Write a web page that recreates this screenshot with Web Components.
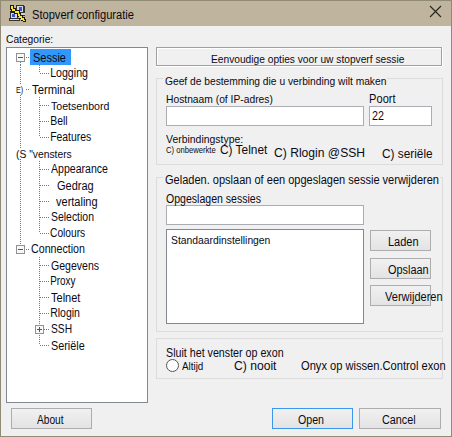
<!DOCTYPE html>
<html lang="nl"><head><meta charset="utf-8"><title>Stopverf configuratie</title>
<style>
html,body{margin:0;padding:0}
body{width:452px;height:437px;overflow:hidden;font-family:"Liberation Sans",Arial,sans-serif;color:#0a0a14}
</style></head><body>
<config-window></config-window>
<script>
const pen = document.createElement('canvas').getContext('2d');
function define(name, html, setup){
  const t = document.createElement('template');
  t.innerHTML = html;
  customElements.define(name, class extends HTMLElement{
    connectedCallback(){
      if(this.shadowRoot) return;
      this.attachShadow({mode:'open'}).append(t.content.cloneNode(true));
      if(setup) setup(this, this.shadowRoot);
    }
  });
}
/* One line of text whose inked width is given by "w". x and y are the gaps before it. */
define('fit-label', `<style>:host{display:block;flex:none;height:14px;line-height:14px;white-space:nowrap}
span{display:inline-block;transform-origin:0 0;white-space:pre}</style><span></span>`, (el, root) => {
  const s = root.querySelector('span'), text = el.getAttribute('text'), size = el.getAttribute('s') || 12.5, w = +el.getAttribute('w');
  s.textContent = text;
  s.style.fontSize = size + 'px';
  pen.font = size + 'px "Liberation Sans"';
  const m = pen.measureText(text), k = w / (m.actualBoundingBoxRight + m.actualBoundingBoxLeft);
  s.style.transform = `translateX(${m.actualBoundingBoxLeft * k}px) scaleX(${k})`;
  el.style.width = w + 'px';
  el.style.marginLeft = (el.getAttribute('x') || 0) + 'px';
  el.style.marginTop = (el.getAttribute('y') || 0) + 'px';
});
define('title-bar', `<style>:host{display:flex;height:25px;background:#bfb59f;box-sizing:border-box}
.icon{margin:4px 0 0 8px;flex:none}.close{margin:4px 0 0 auto;padding-right:9px;flex:none}</style>
<svg class="icon" width="17" height="17" viewBox="0 0 17 17" shape-rendering="crispEdges">
<path d="M7 0h8v1h1v8h-9z" fill="#333"/><path d="M8 1h6v6H8z" fill="#d8dade"/><path d="M10 2h3v4h-3z" fill="#3a56cc"/>
<path d="M10 8h6v2h-6z" fill="#d0d2d6"/><path d="M10 10h6v1h-6z" fill="#333"/>
<path d="M1 6h8v8H1z" fill="#333"/><path d="M2 7h6v6H2z" fill="#d8dade"/><path d="M3 9h3v3H3z" fill="#3a56cc"/>
<path d="M0 13h11v3H0z" fill="#333"/><path d="M1 14h9v1H1z" fill="#d8dade"/>
<path d="M1 0h4v3h2v2h4v3h1v2h2v2h2v2h1v3h-3v-1h-2v-2h-2v-2h-2v-3h-3v-1h-3v-3h-1z" fill="#1a1a10"/>
<path d="M2 1h2v3h2v2h4v3h1v2h2v2h2v2h1v1h-2v-1h-2v-2h-2v-2h-1v-3h-3v-2h-3v-2h-1z" fill="#ffe52e"/></svg>
<fit-label text="Stopverf configuratie" s="12.5" w="102" x="6" y="6"></fit-label>
<svg class="close" width="13" height="13" viewBox="0 0 13 13"><path d="M1 1L12 12M12 1L1 12" stroke="#29261f" stroke-width="1.15"/></svg>`);
define('push-button', `<style>:host{display:flex;flex:none;box-sizing:border-box;height:21px;border:1px solid #adadad;background:linear-gradient(#f1f1f1,#e3e3e3)}
:host([primary]){border-color:#3b97ee}</style><slot></slot>`, el => { el.style.width = el.getAttribute('w') + 'px'; });
define('text-field', `<style>:host{display:flex;flex:none;box-sizing:border-box;height:20px;border:1px solid #abadb3;background:#fff}
:host([list]){height:95px;border-color:#828790}</style><slot></slot>`, el => { el.style.width = el.getAttribute('w') + 'px'; });
define('group-box', `<style>:host{display:flex;flex-direction:column;flex:none;box-sizing:border-box;width:287px;border:1px solid #dcdcdc}
.legend{display:flex;align-self:flex-start;margin:-6px 0 1px 6px;padding:0 1px 0 2px;background:#f0f0f0;height:14px}
:host(:not([title-w])) .legend{display:none}</style><div class="legend"></div><slot></slot>`, (el, root) => {
  el.style.height = el.getAttribute('h') + 'px';
  if(el.hasAttribute('title-w')){
    const l = document.createElement('fit-label');
    l.setAttribute('text', el.getAttribute('legend'));
    l.setAttribute('w', el.getAttribute('title-w'));
    l.setAttribute('s', el.getAttribute('s') || 12);
    root.querySelector('.legend').append(l);
  }
});
/* Tree line: connectors and expander are drawn in a leading 48px gutter. */
define('tree-row', `<style>:host{display:flex;height:16px;flex:none}
svg{flex:none;margin-right:-48px}
.t{display:flex;height:16px;box-sizing:border-box;flex:none}
.t.sel{background:#3297fd;width:41px;margin:0 0 0 23px}</style><svg width="48" height="16" shape-rendering="crispEdges"></svg><div class="t"></div>`, (el, root) => {
  const a = n => el.getAttribute(n), kind = a('kind'), svg = root.querySelector('svg');
  const dots = d => `<path d="${d}" fill="none" stroke="#777" stroke-dasharray="1 1"/>`;
  const box = (x, plus) => `<rect x="${x+.5}" y="4.5" width="8" height="8" rx="1" fill="#f8f8f8" stroke="#919191"/><path d="M${x+2} 8.5h5${plus ? `M${x+4.5} 6v5` : ''}" stroke="#3c55a5"/>`;
  let g = '';
  if(kind === 'root'){
    if(a('pos') === 'first') g += dots('M13.5 13v3');
    if(a('pos') === 'mid') g += dots('M13.5 0v3M13.5 14v2');
    if(a('pos') === 'last') g += dots('M13.5 0v4');
    if(a('pos') !== 'mid') g += box(9);
    if(!el.hasAttribute('plain')) g += dots('M19 8.5h4');
  } else {
    if(!el.hasAttribute('tail')) g += dots('M13.5 0v16');
    g += dots(a('end') !== null ? 'M32.5 0v8' : 'M32.5 0v16') + dots('M33 8.5h9');
    if(el.hasAttribute('plus')) g += '<path d="M28 4h9v9h-9z" fill="#fff"/>' + box(28, true);
  }
  svg.innerHTML = g;
  const sel = el.hasAttribute('selected');
  if(sel) root.querySelector('.t').classList.add('sel');
  root.querySelector('.t').innerHTML = (a('mark') ? `<fit-label text="${a('mark')}" s="9.5" w="7" x="9" y="0"></fit-label>` : '') +
   `<fit-label text='${a('text')}' s="${a('s') || 12.5}" w="${a('w')}" x="${sel ? 3 : a('x') - 7 - (a('mark') ? 16 : 0)}" y="${sel ? 1 : a('y') || 1}"></fit-label>`;
});
define('category-tree', `<style>:host{display:flex;flex-direction:column;box-sizing:border-box;width:142px;height:356px;border:1px solid #828790;background:#fff;padding-top:1px;flex:none}</style>
<tree-row kind="root" pos="first" selected text="Sessie" w="33" x="33"></tree-row>
<tree-row y="0" end text="Logging" w="37" x="51"></tree-row>
<tree-row kind="root" pos="mid" mark="E)" text="Terminal" w="42" x="32"></tree-row>
<tree-row text="Toetsenbord" w="58" x="51" s="11.5"></tree-row>
<tree-row y="0" text="Bell" w="16" x="51"></tree-row>
<tree-row y="0" end text="Features" w="40" x="51"></tree-row>
<tree-row kind="root" pos="mid" plain text='(S "vensters' w="56" x="16" s="11.5"></tree-row>
<tree-row y="0" text="Appearance" w="57" x="51"></tree-row>
<tree-row text="Gedrag" w="36" x="57" s="12"></tree-row>
<tree-row text="vertaling" w="41" x="56" s="12"></tree-row>
<tree-row y="0" text="Selection" w="43" x="51"></tree-row>
<tree-row y="0" end text="Colours" w="35" x="50"></tree-row>
<tree-row y="0" kind="root" pos="last" text="Connection" w="54" x="31"></tree-row>
<tree-row tail text="Gegevens" w="48" x="51" s="12"></tree-row>
<tree-row y="0" tail text="Proxy" w="25" x="51"></tree-row>
<tree-row tail text="Telnet" w="30" x="51" s="12"></tree-row>
<tree-row y="0" tail text="Rlogin" w="29" x="51"></tree-row>
<tree-row y="0" tail plus text="SSH" w="21" x="51"></tree-row>
<tree-row tail end text="Seriële" w="34" x="51" s="12"></tree-row>`);
define('section-heading', `<style>:host{display:flex;box-sizing:border-box;width:286px;height:19px;border:1px solid #a0a0a0;box-shadow:inset 1px 1px #fff,0 1px #fff,1px 0 #fff;flex:none}</style><slot></slot>`);
define('radio-dot', `<style>:host{display:block;flex:none;box-sizing:border-box;width:13px;height:13px;border:1px solid #555;border-radius:50%;background:#fff}</style>`);
define('config-window', `<style>
:host{display:flex;flex-direction:column;box-sizing:border-box;width:452px;height:437px;border:1px solid #918b76;background:#f0f0f0;overflow:hidden}
main{display:flex;height:376px;flex:none;align-items:flex-start}
.left{display:flex;flex-direction:column;gap:2px;padding:5px 0 0 5px;width:142px;flex:none}
.right{display:flex;flex-direction:column;padding:21px 0 0 8px;width:287px;flex:none}
.row{display:flex;align-items:flex-start;flex:none}
footer{display:flex;padding:6px 0 0 10px}
</style>
<title-bar></title-bar>
<main>
<div class="left"><fit-label text="Categorie:" s="11.5" w="47" x="0"></fit-label><category-tree></category-tree></div>
<div class="right">
<section-heading><fit-label text="Eenvoudige opties voor uw stopverf sessie" s="11.5" w="193" x="54" y="3"></fit-label></section-heading>
<group-box h="87" legend="Geef de bestemming die u verbinding wilt maken" title-w="221" s="11.5" style="margin-top:12px">
<div class="row" style="height:15px;margin-top:3px"><fit-label text="Hostnaam (of IP-adres)" s="11.5" w="107" x="9"></fit-label><fit-label text="Poort" s="12.5" w="26" x="97" y="0"></fit-label></div>
<div class="row" style="gap:5px;padding-left:9px;height:25px"><text-field w="198"></text-field><text-field w="63"><fit-label text="22" w="12" x="2" y="1"></fit-label></text-field></div>
<fit-label text="Verbindingstype:" s="11.5" w="77" x="9"></fit-label>
<div class="row" style="margin-top:-4px"><fit-label text="C) onbewerkte" s="8.5" w="50" x="9" y="0"></fit-label><fit-label text="C) Telnet" w="48" x="4" y="1"></fit-label><fit-label text="C) Rlogin @SSH" w="91" x="6" y="4"></fit-label><fit-label text="C) seriële" s="12" w="51" x="17" y="5"></fit-label></div>
</group-box>
<group-box h="155" legend="Geladen. opslaan of een opgeslagen sessie verwijderen" title-w="274" s="12.5" style="margin-top:12px">
<fit-label text="Opgeslagen sessies" s="12" w="95" x="9" y="4"></fit-label>
<div class="row"><text-field w="198" style="margin-left:9px"></text-field></div>
<div class="row" style="margin-top:4px;padding-left:9px;gap:6px"><text-field list w="198"><fit-label text="Standaardinstellingen" s="11.5" w="99" x="4" y="2"></fit-label></text-field>
<div style="display:flex;flex-direction:column;margin-top:1px;flex:none"><push-button w="61"><fit-label text="Laden" s="12" w="30" x="17" y="3"></fit-label></push-button><push-button w="61" style="margin-top:7px"><fit-label text="Opslaan" s="12" w="40" x="17" y="3"></fit-label></push-button><push-button w="61" style="margin-top:6px"><fit-label text="Verwijderen" s="12" w="57" x="14" y="3"></fit-label></push-button></div></div>
</group-box>
<group-box h="41" style="margin-top:6px">
<fit-label text="Sluit het venster op exon" s="12" w="117" x="9" y="6"></fit-label>
<div class="row"><radio-dot style="margin-left:9px"></radio-dot><fit-label text="Altijd" s="11.5" w="21" x="3" y="-1"></fit-label><fit-label text="C) nooit" s="12.5" w="43" x="31" y="-1"></fit-label><fit-label text="Onyx op wissen.Control exon" s="12" w="144" x="24" y="-1"></fit-label></div>
</group-box>
</div></main>
<footer><push-button w="81"><fit-label text="About" s="12.5" w="27" x="25" y="3"></fit-label></push-button><push-button primary w="81" style="margin-left:180px"><fit-label text="Open" s="12.5" w="26" x="25" y="3"></fit-label></push-button><push-button w="82" style="margin-left:6px"><fit-label text="Cancel" s="12.5" w="33" x="22" y="3"></fit-label></push-button></footer>`);
</script></body></html>
